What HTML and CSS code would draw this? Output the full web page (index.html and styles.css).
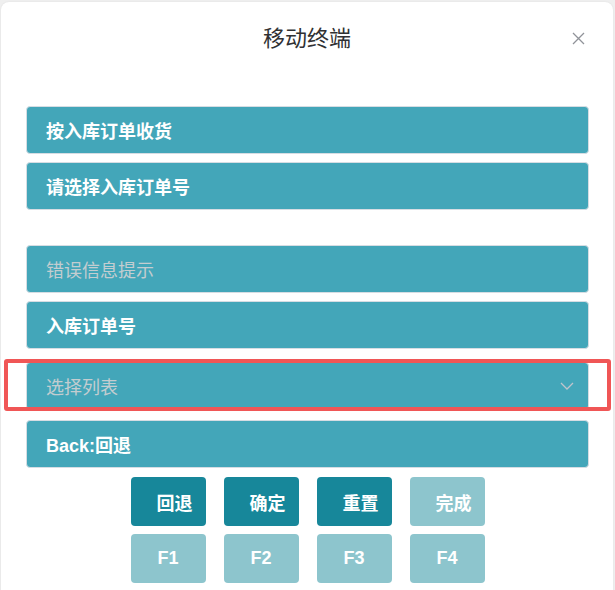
FILE: index.html
```html
<!DOCTYPE html>
<html lang="zh-CN">
<head>
<meta charset="utf-8">
<title>移动终端</title>
<link rel="stylesheet" href="styles.css">
</head>
<body>
<div class="dialog">
  <div class="dialog-header">
    <span class="dialog-title">移动终端</span>
    <span class="close" aria-label="关闭">
      <svg width="13" height="13" viewBox="0 0 13 13"><path d="M1 1 L12 12 M12 1 L1 12" stroke="#909399" stroke-width="1.3" fill="none"/></svg>
    </span>
  </div>
  <div class="dialog-body">
    <div class="group">
      <div class="field strong">按入库订单收货</div>
      <div class="field strong">请选择入库订单号</div>
    </div>
    <div class="group second">
      <div class="field placeholder">错误信息提示</div>
      <div class="field strong">入库订单号</div>
      <div class="field placeholder select">
        <span>选择列表</span>
        <svg class="chevron" width="14" height="8" viewBox="0 0 14 8"><path d="M1 1 L7 7 L13 1" stroke="#c0c4cc" stroke-width="1.3" fill="none"/></svg>
      </div>
      <div class="field strong back">Back:回退</div>
    </div>
    <div class="keys">
      <div class="key dark cn">回退</div>
      <div class="key dark cn">确定</div>
      <div class="key dark cn">重置</div>
      <div class="key light cn">完成</div>
      <div class="key light">F1</div>
      <div class="key light">F2</div>
      <div class="key light">F3</div>
      <div class="key light">F4</div>
    </div>
  </div>
  <div class="highlight"></div>
</div>
</body>
</html>
```

FILE: styles.css
```css
html, body {
  margin: 0;
  padding: 0;
}
body {
  background: #efefef;
  font-family: "Liberation Sans", "Noto Sans CJK SC", sans-serif;
  width: 615px;
  height: 590px;
  overflow: hidden;
}
.dialog {
  position: relative;
  margin: 2px 2px 0 1px;
  background: #ffffff;
  border-radius: 8px 8px 0 0;
  height: 600px;
  box-shadow: 0 0 2px rgba(0,0,0,0.08);
}
.dialog-header {
  position: relative;
  padding-top: 18px;
  height: 42px;
  text-align: center;
}
.dialog-title {
  font-size: 22px;
  line-height: 38px;
  color: #303133;
}
.close {
  position: absolute;
  top: 30px;
  right: 28px;
  width: 13px;
  height: 13px;
  display: block;
}
.close svg { display: block; }
.dialog-body {
  padding: 44px 24px 0 25px;
}
.group {
  display: flex;
  flex-direction: column;
  gap: 8px;
}
.group.second {
  margin-top: 35px;
}
.field {
  box-sizing: border-box;
  height: 48px;
  background: #43a6b9;
  border: 1px solid #d6dde3;
  border-radius: 4px;
  padding-left: 19px;
  font-size: 18px;
  display: flex;
  align-items: center;
}
.field.strong {
  color: #ffffff;
  font-weight: bold;
}
.field.placeholder {
  color: #c3cdd0;
}
.field.select {
  margin-top: 5px;
  justify-content: space-between;
  padding-right: 14px;
}
.chevron { display: block; }
.field.back {
  margin-top: 2px;
}
.keys {
  margin: 9px auto 0;
  width: 354px;
  display: grid;
  grid-template-columns: repeat(4, 75px);
  column-gap: 18px;
  row-gap: 8px;
}
.key {
  height: 49px;
  border-radius: 4px;
  color: #ffffff;
  font-size: 18px;
  font-weight: bold;
  display: flex;
  align-items: center;
  justify-content: center;
  box-sizing: border-box;
}
.key.cn {
  padding-left: 13px;
}
.key.dark {
  background: #17879a;
}
.key.light {
  background: #8dc5cd;
}
.highlight {
  position: absolute;
  left: 3px;
  top: 357px;
  width: 607px;
  height: 52px;
  box-sizing: border-box;
  border: 4px solid #f05656;
  border-radius: 3px;
  pointer-events: none;
}
```
